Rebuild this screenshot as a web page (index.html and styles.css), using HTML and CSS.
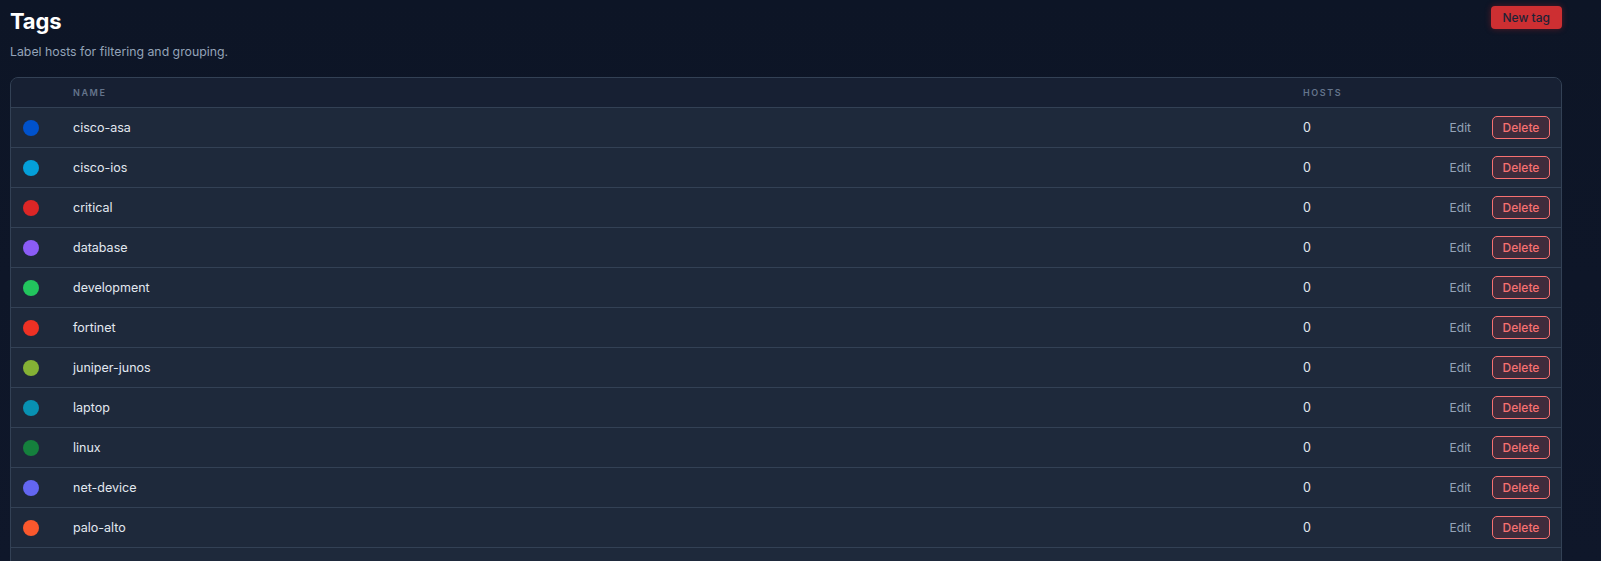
FILE: index.html
```html
<!DOCTYPE html>
<html lang="en">
<head>
<meta charset="utf-8">
<title>Tags</title>
<link rel="stylesheet" href="styles.css">
</head>
<body>
<div class="page">
  <header class="page-head">
    <div class="titles">
      <h1 class="title">Tags</h1>
      <p class="subtitle">Label hosts for filtering and grouping.</p>
    </div>
    <button class="btn-new">New tag</button>
  </header>

  <div class="card">
    <div class="row head">
      <div class="cell"></div>
      <div class="cell th">Name</div>
      <div class="cell th">Hosts</div>
      <div class="cell"></div>
    </div>
    <div class="row"><div class="cell"><span class="dot" style="background:#0052cc"></span></div><div class="cell name">cisco-asa</div><div class="cell hosts">0</div><div class="cell actions"><button class="btn-edit">Edit</button><button class="btn-del">Delete</button></div></div>
    <div class="row"><div class="cell"><span class="dot" style="background:#049fd9"></span></div><div class="cell name">cisco-ios</div><div class="cell hosts">0</div><div class="cell actions"><button class="btn-edit">Edit</button><button class="btn-del">Delete</button></div></div>
    <div class="row"><div class="cell"><span class="dot" style="background:#dc2626"></span></div><div class="cell name">critical</div><div class="cell hosts">0</div><div class="cell actions"><button class="btn-edit">Edit</button><button class="btn-del">Delete</button></div></div>
    <div class="row"><div class="cell"><span class="dot" style="background:#8b5cf6"></span></div><div class="cell name">database</div><div class="cell hosts">0</div><div class="cell actions"><button class="btn-edit">Edit</button><button class="btn-del">Delete</button></div></div>
    <div class="row"><div class="cell"><span class="dot" style="background:#22c55e"></span></div><div class="cell name">development</div><div class="cell hosts">0</div><div class="cell actions"><button class="btn-edit">Edit</button><button class="btn-del">Delete</button></div></div>
    <div class="row"><div class="cell"><span class="dot" style="background:#ee3124"></span></div><div class="cell name">fortinet</div><div class="cell hosts">0</div><div class="cell actions"><button class="btn-edit">Edit</button><button class="btn-del">Delete</button></div></div>
    <div class="row"><div class="cell"><span class="dot" style="background:#84b135"></span></div><div class="cell name">juniper-junos</div><div class="cell hosts">0</div><div class="cell actions"><button class="btn-edit">Edit</button><button class="btn-del">Delete</button></div></div>
    <div class="row"><div class="cell"><span class="dot" style="background:#0891b2"></span></div><div class="cell name">laptop</div><div class="cell hosts">0</div><div class="cell actions"><button class="btn-edit">Edit</button><button class="btn-del">Delete</button></div></div>
    <div class="row"><div class="cell"><span class="dot" style="background:#15803d"></span></div><div class="cell name">linux</div><div class="cell hosts">0</div><div class="cell actions"><button class="btn-edit">Edit</button><button class="btn-del">Delete</button></div></div>
    <div class="row"><div class="cell"><span class="dot" style="background:#6366f1"></span></div><div class="cell name">net-device</div><div class="cell hosts">0</div><div class="cell actions"><button class="btn-edit">Edit</button><button class="btn-del">Delete</button></div></div>
    <div class="row"><div class="cell"><span class="dot" style="background:#fa582d"></span></div><div class="cell name">palo-alto</div><div class="cell hosts">0</div><div class="cell actions"><button class="btn-edit">Edit</button><button class="btn-del">Delete</button></div></div>
    <div class="card-foot"></div>
  </div>
</div>
</body>
</html>
```

FILE: styles.css
```css
* { box-sizing: border-box; }
html, body { margin: 0; padding: 0; }
body {
  background: linear-gradient(180deg, #0d1526 0%, #0f172a 100%);
  font-family: Inter, "Noto Sans", "Liberation Sans", sans-serif;
  color: #e2e8f0;
  height: 561px;
  overflow: hidden;
}
.page {
  padding: 6px 39px 0 10px;
}
.page-head {
  display: flex;
  justify-content: space-between;
  align-items: flex-start;
}
.title {
  margin: 0;
  padding-top: 1px;
  font-size: 22px;
  line-height: 28px;
  font-weight: 700;
  color: #ffffff;
  letter-spacing: -0.2px;
}
.subtitle {
  margin: 8px 0 0;
  font-size: 12.3px;
  line-height: 18px;
  color: #94a3b8;
}
.btn-new {
  height: 23px;
  padding: 0 12px;
  border: none;
  border-radius: 4px;
  background: #cd2f32;
  color: #1e2236;
  font-family: inherit;
  font-size: 12px;
  font-weight: 500;
  box-shadow: 0 0 6px rgba(220, 38, 38, 0.35);
}
.card {
  margin-top: 16px;
  border: 1px solid #334155;
  border-radius: 8px;
  overflow: hidden;
  background: #1e293b;
}
.row {
  display: grid;
  grid-template-columns: 62px 1230px 1fr auto;
  align-items: center;
  height: 40px;
  border-top: 1px solid #334155;
  background: #1e293b;
}
.row.head {
  height: 29px;
  border-top: none;
  background: #172033;
}
.card-foot {
  height: 24px;
  border-top: 1px solid #334155;
  background: #1e293b;
}
.th {
  font-size: 9px;
  font-weight: 600;
  letter-spacing: 1.6px;
  text-transform: uppercase;
  color: #64748b;
}
.dot {
  display: block;
  width: 16px;
  height: 16px;
  border-radius: 50%;
  margin-left: 12px;
}
.name, .hosts {
  font-size: 12.5px;
  color: #e2e8f0;
}
.actions {
  display: flex;
  align-items: center;
  gap: 13px;
  padding-right: 11px;
}
.btn-edit {
  background: none;
  border: none;
  color: #94a3b8;
  font-family: inherit;
  font-size: 12px;
  padding: 4px 8px;
}
.btn-del {
  width: 58px;
  height: 23px;
  border: 1px solid #f87171;
  border-radius: 5px;
  background: #3f2c3c;
  color: #f87171;
  font-family: inherit;
  font-size: 12px;
  font-weight: 500;
  padding: 0;
}
```
